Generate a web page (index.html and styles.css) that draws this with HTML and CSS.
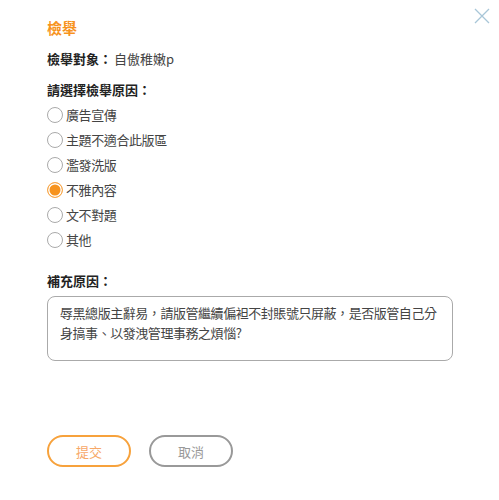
FILE: index.html
```html
<!DOCTYPE html>
<html lang="zh-Hant">
<head>
<meta charset="utf-8">
<link rel="stylesheet" href="styles.css">
</head>
<body>
<div class="dialog">
  <button class="close" aria-label="close">
    <svg width="16" height="16" viewBox="0 0 16 16"><path d="M1 1L15 15M15 1L1 15" stroke="#a8c6d8" stroke-width="1.3" fill="none"/></svg>
  </button>
  <h1 class="title">檢舉</h1>
  <div class="target"><span class="label">檢舉對象：</span><span class="name">自傲稚嫩p</span></div>
  <div class="label reason-label">請選擇檢舉原因：</div>
  <div class="options">
    <label class="opt"><span class="radio"></span>廣告宣傳</label>
    <label class="opt"><span class="radio"></span>主題不適合此版區</label>
    <label class="opt"><span class="radio"></span>濫發洗版</label>
    <label class="opt"><span class="radio checked"></span>不雅內容</label>
    <label class="opt"><span class="radio"></span>文不對題</label>
    <label class="opt"><span class="radio"></span>其他</label>
  </div>
  <div class="label extra-label">補充原因：</div>
  <div class="textarea">辱黑總版主辭易，請版管繼續偏袒不封賬號只屏蔽，是否版管自己分身搞事、以發洩管理事務之煩惱?</div>
  <div class="actions">
    <button class="btn submit">提交</button>
    <button class="btn cancel">取消</button>
  </div>
</div>
</body>
</html>
```
FILE: styles.css
```css
* { box-sizing: border-box; }
html, body { margin: 0; padding: 0; background: #fff; }
body { font-family: "Noto Sans CJK TC", "Noto Sans", sans-serif; color: #333; font-size: 13px; }
.dialog { position: relative; width: 499px; height: 500px; padding: 17px 46px 0 47px; }
.close { position: absolute; top: 8px; right: 9px; width: 16px; height: 16px; padding: 0; border: 0; background: none; }
.close svg { display: block; }
.title { margin: 0; font-size: 15px; font-weight: 700; color: #f7931e; line-height: 22px; }
.label { font-weight: 700; color: #222; }
.target { margin-top: 10px; line-height: 20px; }
.target .name { color: #444; margin-left: 2px; }
.reason-label { margin-top: 11px; line-height: 20px; }
.options { display: flex; flex-direction: column; margin-top: 2px; }
.opt { display: flex; align-items: center; height: 25px; gap: 3px; color: #444; letter-spacing: -0.4px; }
.radio { width: 16px; height: 16px; border: 1px solid #aaa; border-radius: 50%; background: #fff; flex: none; }
.radio.checked { border: 1px solid #f8a94e; background: #f7931e; box-shadow: inset 0 0 0 1.5px #fff; }
.extra-label { margin-top: 19px; line-height: 20px; }
.textarea { margin-top: 5px; width: 406px; height: 65px; border: 1px solid #aaa; border-radius: 8px; padding: 6px 6px 6px 12px; line-height: 20px; color: #444; letter-spacing: -0.45px; }
.actions { display: flex; gap: 18px; margin-top: 74px; }
.btn { width: 84px; height: 32px; border-radius: 16px; background: #fff; font-family: inherit; font-size: 13px; padding: 0; }
.submit { border: 2px solid #f7a23c; color: #f7a867; }
.cancel { border: 2px solid #999; color: #999; }
```
